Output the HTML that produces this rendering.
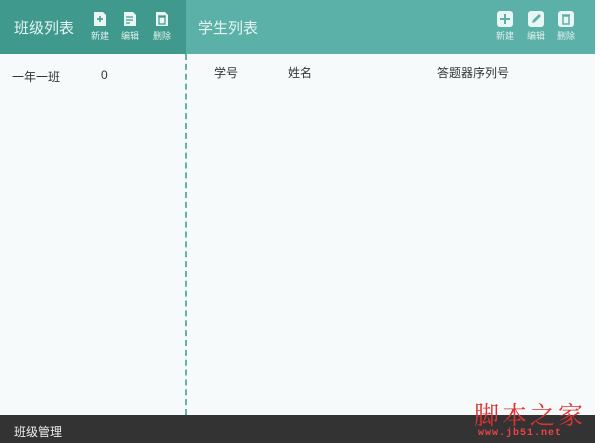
<!DOCTYPE html>
<html><head><meta charset="utf-8"><style>
*{margin:0;padding:0;box-sizing:border-box}
body{width:600px;height:443px;background:#fff;font-family:"Liberation Sans","Noto Sans CJK SC",sans-serif;position:relative;overflow:hidden}
.main{position:absolute;left:0;top:0;width:595px;height:443px;background:#f6fafa}
.hl{position:absolute;left:0;top:0;width:186px;height:54px;background:#3f998d}
.hr{position:absolute;left:186px;top:0;width:409px;height:54px;background:#5bb0a8}
.t{position:absolute;color:#e6f4f2;font-size:15px;top:17px}
.btn{position:absolute;top:11px;width:24px;text-align:center;color:#dff0ee;font-size:9px}
.btn svg{display:block;margin:0 auto 2px}
.sep{position:absolute;left:185px;top:54px;height:361px;border-left:2px dashed #62b3a8}
.txt{position:absolute;font-size:12px;color:#333}
.foot{position:absolute;left:0;top:415px;width:595px;height:28px;background:#333}
.foot span{position:absolute;left:14px;top:8px;color:#eee;font-size:12px}
.wm{position:absolute;left:474px;top:396px;color:#d33;font-size:25px;font-family:"Noto Serif CJK SC",serif;letter-spacing:3px}
.wm2{position:absolute;left:478px;top:428px;color:#e44;font-size:10px;font-family:"Liberation Mono",monospace;font-weight:bold;letter-spacing:1px}
</style></head><body>
<div class="main"></div>
<div class="hl"></div><div class="hr"></div>
<div class="t" style="left:14px">班级列表</div>
<div class="t" style="left:198px">学生列表</div>
<div class="btn" style="left:88px"><svg width="14" height="16"><path d="M1 1h9l3 3v11H1z" fill="#eaf6f4"/><path d="M7 5v6M4 8h6" stroke="#3f998d" stroke-width="1.5"/></svg>新建</div>
<div class="btn" style="left:118px"><svg width="14" height="16"><path d="M1 1h9l3 3v11H1z" fill="#eaf6f4"/><path d="M3 6h7M3 9h7M3 12h4" stroke="#3f998d" stroke-width="1.2"/></svg>编辑</div>
<div class="btn" style="left:150px"><svg width="14" height="16"><path d="M1 1h9l3 3v11H1z" fill="#eaf6f4"/><path d="M4 6h6v7H4zM3 5h8" stroke="#3f998d" stroke-width="1.2" fill="none"/></svg>删除</div>
<div class="btn" style="left:493px"><svg width="16" height="16"><rect x="0" y="0" width="16" height="16" rx="3" fill="#eaf6f4"/><path d="M8 3v10M3 8h10" stroke="#5bb0a8" stroke-width="2"/></svg>新建</div>
<div class="btn" style="left:524px"><svg width="16" height="16"><rect x="0" y="0" width="16" height="16" rx="3" fill="#eaf6f4"/><path d="M4 12l1-3 6-6 2 2-6 6z" fill="#5bb0a8"/></svg>编辑</div>
<div class="btn" style="left:554px"><svg width="16" height="16"><rect x="0" y="0" width="16" height="16" rx="3" fill="#eaf6f4"/><path d="M5 5h6v8H5zM4 4h8" stroke="#5bb0a8" stroke-width="1.5" fill="none"/></svg>删除</div>
<div class="sep"></div>
<div class="txt" style="left:12px;top:68px">一年一班</div>
<div class="txt" style="left:101px;top:68px">0</div>
<div class="txt" style="left:214px;top:64px">学号</div>
<div class="txt" style="left:288px;top:64px">姓名</div>
<div class="txt" style="left:437px;top:64px">答题器序列号</div>
<div class="foot"><span>班级管理</span></div>
<div class="wm">脚本之家</div>
<div class="wm2">www.jb51.net</div>
</body></html>
